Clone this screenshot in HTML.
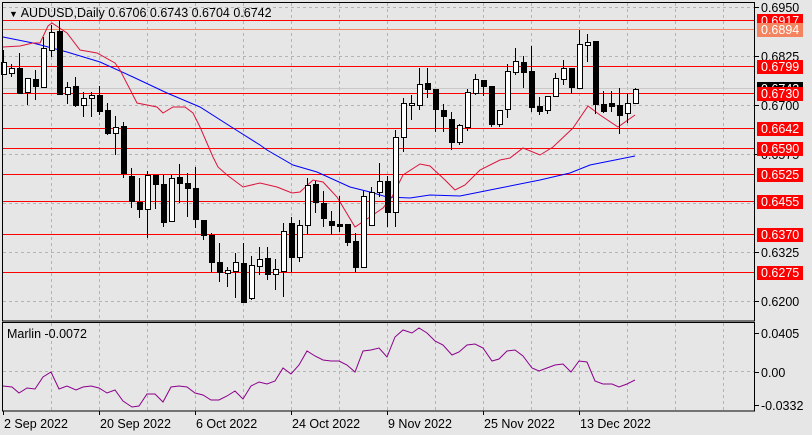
<!DOCTYPE html>
<html><head><meta charset="utf-8"><style>
html,body{margin:0;padding:0;background:#e6e6e6;}
svg{display:block;font-family:"Liberation Sans",Tahoma,sans-serif;}
</style></head><body>
<svg id="s" width="812" height="435" viewBox="0 0 812 435" xmlns="http://www.w3.org/2000/svg">
<rect width="812" height="435" fill="#e6e6e6"/>
<g id="grid" stroke="#b4b4b4" stroke-width="1" stroke-dasharray="3,3" shape-rendering="crispEdges"></g>
<g id="lvl" shape-rendering="crispEdges"></g>
<line x1="3" y1="88.5" x2="755" y2="88.5" stroke="#c8c8c8" stroke-width="1"/>
<polyline id="blue" fill="none" stroke="#0000ff" stroke-width="1" points="3,37 33,43 67,52 100,62 133,77 167,93 200,107 233,128 260,145 267,150 293,165 317,172 350,187 370,192 387,197 410,198 430,195 460,196 500,188 540,180 570,173 590,165 610,161 635,156"/>
<polyline id="red" fill="none" stroke="#dc143c" stroke-width="1" points="3,47 20,46 33,43 40,43 48,26 52,23 67,33 80,50 97,53 115,63 120,70 137,103 157,107 163,113 173,107 185,107 193,113 200,127 213,157 218,167 227,175 243,187 260,183 277,187 292,193 300,192 313,180 323,182 337,197 355,227 370,217 383,208 392,197 403,175 420,164 430,166 445,180 455,190 465,185 480,170 500,160 510,158 523,148 540,155 553,147 573,128 588,106 600,115 618,127 635,115"/>
<g id="c" shape-rendering="crispEdges"></g>
<polyline fill="none" stroke="#8b008b" stroke-width="1" points="3,386 12,387 19,393 27,388 35,389 43,377 51,372 59,389 67,386 76,390 83,387 91,386 99,388 107,393 115,390 123,401 132,407 139,406 147,394 155,394 163,402 171,387 179,386 187,387 195,393 203,395 211,400 219,400 227,396 235,391 243,399 251,386 259,382 267,384 275,381 283,368 291,374 299,365 307,351 315,356 323,360 331,361 339,361 347,365 355,372 363,351 371,350 379,348 387,357 395,337 403,330 412,333 419,328 427,333 435,341 443,345 452,355 459,352 467,345 475,344 483,348 492,361 499,359 507,351 515,350 523,356 532,368 539,371 547,368 555,365 563,364 571,372 579,361 587,362 595,381 603,384 612,384 619,387 627,384 635,380"/>
<g fill="none" stroke="#000" stroke-width="1" shape-rendering="crispEdges">
<rect x="2.5" y="2.5" width="752" height="318.5"/>
<rect x="2.5" y="322.5" width="752" height="88.5"/>
</g>
<g id="lab" font-size="12.5"></g>
<text x="9" y="17" font-size="12.5" fill="#000"><tspan font-size="9">▼</tspan> AUDUSD,Daily  0.6706 0.6743 0.6704 0.6742</text>
<text x="7" y="338" font-size="12.5" fill="#000">Marlin -0.0072</text>
</svg>
<script>
var NS="http://www.w3.org/2000/svg";
function el(p,t,a,txt){var e=document.createElementNS(NS,t);for(var k in a)e.setAttribute(k,a[k]);if(txt!==undefined)e.textContent=txt;document.getElementById(p).appendChild(e);return e;}
// grid
[51,99,147,195,243,291,339,387,435,483,531,579,627,675,723].forEach(function(x){
 el("grid","line",{x1:x+.5,y1:3,x2:x+.5,y2:321});el("grid","line",{x1:x+.5,y1:323,x2:x+.5,y2:411});});
[7,56,105,154,203,252,301].forEach(function(y){el("grid","line",{x1:3,y1:y+.5,x2:755,y2:y+.5});});
el("grid","line",{x1:3,y1:371.5,x2:755,y2:371.5});
// price axis labels
[["0.6950",7],["0.6825",56],["0.6700",105],["0.6575",154],["0.6325",252],["0.6200",301]].forEach(function(a){
 el("lab","line",{x1:755,y1:a[1]+.5,x2:759,y2:a[1]+.5,stroke:"#000"});
 el("lab","text",{x:761,y:a[1]+5,fill:"#000"},a[0]);});
// bid label
el("lab","rect",{x:757,y:82,width:46,height:13,fill:"#000"});
el("lab","text",{x:761,y:93,fill:"#fff"},"0.6743");
// levels
var L=[["0.6917",20,"#ff0000"],["0.6894",29,"#f4845f"],["0.6799",66,"#ff0000"],["0.6730",93,"#ff0000"],["0.6642",128,"#ff0000"],["0.6590",148,"#ff0000"],["0.6525",174,"#ff0000"],["0.6455",201,"#ff0000"],["0.6370",234,"#ff0000"],["0.6275",272,"#ff0000"]];
L.forEach(function(a){
 el("lvl","line",{x1:3,y1:a[1]+.5,x2:755,y2:a[1]+.5,stroke:a[2],"stroke-width":1.3});
 el("lab","rect",{x:757,y:a[1]-6,width:46,height:14,fill:a[2]});
 el("lab","text",{x:761,y:a[1]+5,fill:"#fff"},a[0]);});
// indicator axis
[["0.0405",333],["0.00",372],["-0.0332",405]].forEach(function(a){
 el("lab","line",{x1:755,y1:a[1]+.5,x2:759,y2:a[1]+.5,stroke:"#000"});
 el("lab","text",{x:761,y:a[1]+5,fill:"#000"},a[0]);});
// dates
[["2 Sep 2022",3],["20 Sep 2022",99],["6 Oct 2022",195],["24 Oct 2022",291],["9 Nov 2022",387],["25 Nov 2022",483],["13 Dec 2022",579]].forEach(function(a){
 el("lab","line",{x1:a[1]+.5,y1:411,x2:a[1]+.5,y2:415,stroke:"#000"});
 el("lab","text",{x:a[1]+1,y:428,fill:"#000"},a[0]);});
// candles [x,high,top,bottom,low,bull]
var C=[[3,50,62,74,75,1],[11,64,68,73,77,1],[19,53,68,93,93,0],[27,78,78,92,105,1],[35,70,79,86,100,0],[43,37,48,87,87,1],[51,25,32,50,57,1],[59,20,31,94,94,0],[67,82,87,94,104,1],[75,77,86,105,107,0],[83,92,98,105,117,1],[91,92,95,98,117,1],[99,86,95,111,115,0],[107,103,110,133,135,0],[115,116,127,133,155,1],[123,122,126,173,178,0],[131,168,176,201,208,0],[139,178,202,209,218,0],[147,171,175,209,238,1],[155,175,175,184,209,0],[163,175,184,222,227,0],[171,175,178,221,222,1],[179,164,177,183,203,0],[187,173,183,188,217,0],[195,167,188,219,228,0],[203,220,220,235,240,0],[211,233,235,262,272,0],[219,243,262,272,282,0],[227,267,270,273,287,1],[235,253,262,271,298,1],[243,243,263,302,303,0],[251,256,265,298,300,1],[259,247,259,266,275,1],[267,247,258,274,280,0],[275,259,269,274,290,1],[283,223,231,271,297,1],[291,217,223,257,272,0],[299,220,225,257,262,1],[307,178,185,225,234,1],[315,181,184,202,213,0],[323,191,203,218,227,0],[331,211,221,225,235,0],[339,196,224,226,232,0],[347,224,224,242,246,0],[355,233,241,267,272,0],[363,191,196,267,268,1],[371,187,192,225,225,1],[379,163,181,192,197,1],[387,176,181,212,227,0],[395,130,137,212,227,1],[403,98,103,137,152,1],[411,95,103,105,120,1],[419,68,84,105,110,1],[427,68,83,89,98,0],[435,89,89,109,132,0],[443,104,110,116,132,0],[451,112,119,142,150,0],[459,124,125,142,145,1],[467,89,92,127,131,1],[475,74,79,93,95,1],[483,80,80,86,96,0],[491,86,86,124,127,0],[499,110,110,124,127,1],[507,64,71,109,118,1],[515,48,61,72,75,1],[523,56,62,72,88,0],[531,46,71,107,112,0],[539,97,106,111,115,0],[547,96,96,110,114,1],[555,73,78,96,96,1],[563,60,68,79,85,1],[571,68,68,87,94,0],[579,30,44,88,88,1],[587,34,42,45,62,1],[595,41,41,104,114,0],[603,91,104,111,113,0],[611,91,103,106,112,0],[619,88,105,115,134,0],[627,94,103,113,123,1],[635,88,89,103,104,1]];
C.forEach(function(c){
 el("c","line",{x1:c[0]+.5,y1:c[1],x2:c[0]+.5,y2:c[4],stroke:"#000"});
 var h=Math.max(c[3]-c[2],1);
 el("c","rect",{x:c[0]-2+.5,y:c[2]+.5,width:5,height:h,fill:c[5]?"#fff":"#000",stroke:"#000"});
});
</script>
</body></html>
